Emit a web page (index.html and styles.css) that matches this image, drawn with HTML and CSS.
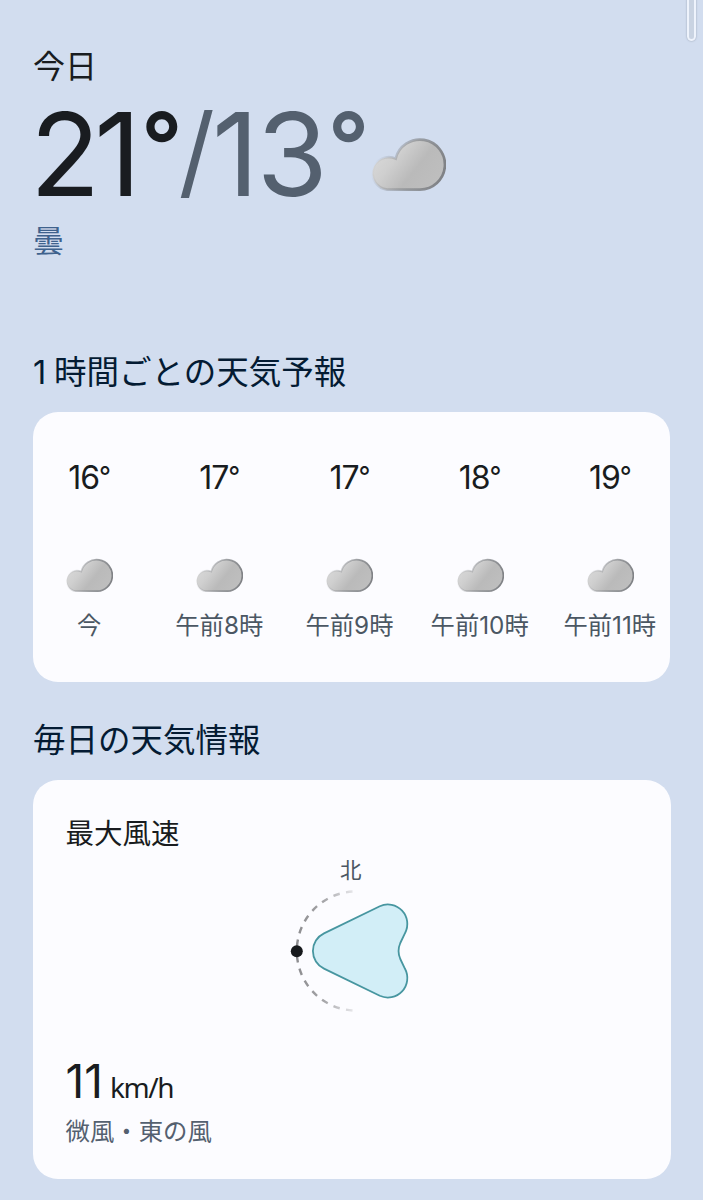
FILE: index.html
```html
<!DOCTYPE html>
<html lang="ja">
<head>
  <meta charset="UTF-8" />
  <meta name="viewport" content="width=device-width, initial-scale=1.0" />
  <title>天気予報</title>
  <link rel="stylesheet" href="styles.css">
</head>
<body>
  <svg class="defs" width="0" height="0">
    <defs>
      <linearGradient id="cloud-fill" x1="0" y1="0.25" x2="1" y2="0.8">
        <stop offset="0" stop-color="#dadada" />
        <stop offset="0.3" stop-color="#cfcfcf" />
        <stop offset="0.6" stop-color="#bababa" />
        <stop offset="1" stop-color="#bfbfbf" />
      </linearGradient>
      <linearGradient id="cloud-edge" x1="0" y1="0.3" x2="1" y2="0.5">
        <stop offset="0.05" stop-color="#7d8085" stop-opacity="0" />
        <stop offset="0.6" stop-color="#85888c" stop-opacity="0.75" />
        <stop offset="1" stop-color="#808286" />
      </linearGradient>
      <symbol id="cloud" viewBox="0 0 48 34">
        <path d="M10.8 33.2A10.3 10.3 0 1 1 16.2 13.6A15.8 15.8 0 1 1 31.5 33.2Z" fill="url(#cloud-fill)" stroke="url(#cloud-edge)" stroke-width="1.7" />
      </symbol>
    </defs>
  </svg>
  <div class="scroll-thumb"></div>

  <header class="today">
    <div class="today-label">今日</div>
    <div class="today-temp">
      <span class="high">21<span class="deg">°</span></span><span class="low"><span class="slash">/</span><span class="tens">1</span>3<span class="deg">°</span></span>
      <svg class="today-icon"><use href="#cloud" /></svg>
    </div>
    <div class="today-condition">曇</div>
  </header>

  <h2><span class="one">1</span>時間ごとの天気予報</h2>
  <section class="card hourly">
    <div class="hour">
      <div class="temp">16<span class="deg">°</span></div>
      <svg class="icon"><use href="#cloud" /></svg>
      <div class="time">今</div>
    </div>
    <div class="hour">
      <div class="temp">17<span class="deg">°</span></div>
      <svg class="icon"><use href="#cloud" /></svg>
      <div class="time">午前8時</div>
    </div>
    <div class="hour">
      <div class="temp">17<span class="deg">°</span></div>
      <svg class="icon"><use href="#cloud" /></svg>
      <div class="time">午前9時</div>
    </div>
    <div class="hour">
      <div class="temp">18<span class="deg">°</span></div>
      <svg class="icon"><use href="#cloud" /></svg>
      <div class="time">午前10時</div>
    </div>
    <div class="hour">
      <div class="temp">19<span class="deg">°</span></div>
      <svg class="icon"><use href="#cloud" /></svg>
      <div class="time">午前11時</div>
    </div>
  </section>

  <h2>毎日の天気情報</h2>
  <section class="card wind">
    <h3>最大風速</h3>
    <div class="compass">
      <div class="north">北</div>
      <svg class="dial" width="130" height="130" viewBox="286 886 130 130">
        <defs>
          <linearGradient id="dash-fade" gradientUnits="userSpaceOnUse" x1="296" y1="0" x2="356" y2="0">
            <stop offset="0" stop-color="#8c8c8f" />
            <stop offset="0.45" stop-color="#a4a4a7" />
            <stop offset="1" stop-color="#a8a8ac" stop-opacity="0.2" />
          </linearGradient>
        </defs>
        <g fill="none" stroke="url(#dash-fade)" stroke-width="2.4" stroke-dasharray="6.6 6.4" stroke-dashoffset="-5">
          <path d="M296.8 951A59.5 59.5 0 0 1 353.5 891.5" />
          <path d="M296.8 951A59.5 59.5 0 0 0 353.5 1010.5" />
        </g>
        <circle cx="296.8" cy="951.2" r="6" fill="#17191c" />
        <path d="M324 933.4L379.8 906.2A19.5 19.5 0 0 1 405 933.2L400.3 943Q396.8 951 400.3 959L405 968.8A19.5 19.5 0 0 1 379.8 995.8L324 968.6A19.5 19.5 0 0 1 324 933.4Z" fill="#d2eef7" stroke="#4796a0" stroke-width="1.8" />
      </svg>
    </div>
    <div class="speed"><span class="value">11</span><span class="unit">km/h</span></div>
    <div class="detail">微風・東の風</div>
  </section>
</body>
</html>
```
FILE: styles.css
```css
* { box-sizing: border-box; }
body {
  margin: 0;
  padding: 0 33px;
  height: 1200px;
  overflow: hidden;
  background: #d2ddef;
  color: #191c20;
  font-family: Inter, 'Noto Sans CJK JP', sans-serif;
}
.defs {
  position: absolute;
}
.scroll-thumb {
  position: absolute;
  top: -10px;
  right: 7px;
  width: 9px;
  height: 51px;
  border: 2px solid #eef3fc;
  border-radius: 5px;
  background: #c9d3e2;
  box-shadow: 0 0 2px #8e9aac;
}
.today {
  height: 336px;
  padding-top: 43px;
}
.today-label {
  font-size: 32px;
  line-height: 48px;
}
.today-temp {
  display: flex;
  height: 128px;
  margin-left: -3px;
  font-size: 115px;
  line-height: 127px;
  letter-spacing: -6px;
}
.deg {
  font-size: 0.82em;
  line-height: 0;
  vertical-align: 0.16em;
}
.today-temp .deg {
  margin-left: 6px;
  font-size: 0.79em;
  font-weight: 600;
  vertical-align: 0.2em;
}
.low {
  color: #54606f;
}
.slash {
  display: inline-block;
  margin: 0 3px 0 2px;
  font-size: 101px;
  line-height: 0;
  vertical-align: 9px;
}
.tens {
  margin-right: 4px;
}
.today-icon {
  width: 76px;
  height: 54px;
  margin: 46px 0 0 7px;
}
.today-condition {
  font-size: 31px;
  line-height: 44px;
  color: #3f628d;
}
h2 {
  margin: 0;
  height: 76px;
  padding-top: 13px;
  font-size: 32.5px;
  line-height: 48px;
  font-weight: 400;
  color: #041b33;
}
.one {
  display: inline-block;
  width: 21px;
}
.card {
  background: #fcfcff;
  border-radius: 25px;
}
.hourly {
  display: flex;
  width: 637px;
  height: 270px;
  margin-bottom: 22px;
  overflow: hidden;
}
.hour {
  flex: 0 0 130.2px;
  display: flex;
  flex-direction: column;
  align-items: center;
  margin-left: -9px;
  margin-right: 9px;
  padding-top: 46px;
}
.temp {
  font-size: 32px;
  line-height: 40px;
  letter-spacing: -1px;
}
.icon {
  width: 48px;
  height: 34px;
  margin: 60px 0 15px;
}
.time {
  font-size: 24.3px;
  line-height: 36px;
  color: #4b5763;
  white-space: nowrap;
}
.wind {
  width: 638px;
  height: 399px;
  padding: 33px 33px 0 32.5px;
}
h3 {
  margin: 0;
  font-size: 28.5px;
  line-height: 42px;
  font-weight: 400;
}
.compass {
  display: flex;
  flex-direction: column;
  align-items: center;
  height: 198px;
  margin-top: -1px;
  padding-right: 2px;
}
.north {
  font-size: 21.5px;
  line-height: 32px;
  color: #4b5763;
}
.speed {
  display: flex;
  align-items: baseline;
  height: 61px;
}
.value {
  font-size: 46px;
  line-height: 58px;
}
.unit {
  margin-left: 7px;
  font-family: 'Noto Sans', sans-serif;
  font-size: 28px;
  line-height: 40px;
  letter-spacing: -1.4px;
}
.detail {
  font-size: 24.4px;
  line-height: 36px;
  color: #54606f;
}
```
